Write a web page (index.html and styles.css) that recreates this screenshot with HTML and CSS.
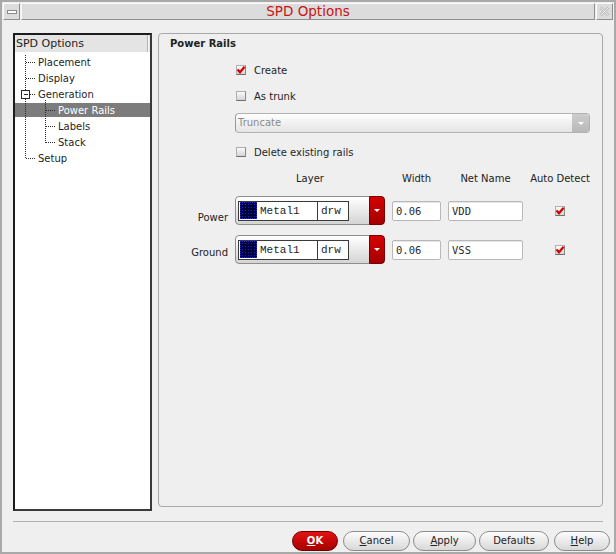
FILE: index.html
```html
<!DOCTYPE html>
<html>
<head>
<meta charset="utf-8">
<title>SPD Options</title>
<link rel="stylesheet" href="styles.css">
</head>
<body>
<div class="window">
  <div class="titlebar">
    <div class="tb-btn"><span class="tb-min-bar"></span></div>
    <div class="tb-title">SPD Options</div>
    <div class="tb-btn">
      <svg width="11" height="11" viewBox="0 0 11 11">
        <path d="M1.5 1.5 L9.5 9.5 M9.5 1.5 L1.5 9.5" stroke="#c2c2c2" stroke-width="3" fill="none"/>
        <path d="M1.5 1.5 L9.5 9.5 M9.5 1.5 L1.5 9.5" stroke="#ececec" stroke-width="1" fill="none"/>
      </svg>
    </div>
  </div>

  <div class="main">
    <div class="tree">
      <div class="tree-head"><span class="tree-head-text">SPD Options</span><span class="tree-handle"></span></div>
      <div class="tree-body">
        <div class="node l1">Placement</div>
        <div class="node l1">Display</div>
        <div class="node l1">Generation</div>
        <div class="node l2 selected">Power Rails</div>
        <div class="node l2">Labels</div>
        <div class="node l2">Stack</div>
        <div class="node l1">Setup</div>
        <svg class="tree-lines" width="60" height="112" viewBox="0 0 60 112" shape-rendering="crispEdges">
          <g stroke="#2a2a2a" stroke-width="1" stroke-dasharray="1 1" fill="none">
            <path d="M10.5 3 V107"/>
            <path d="M11 10.5 H21"/>
            <path d="M11 26.5 H21"/>
            <path d="M11 106.5 H21"/>
            <path d="M15 42.5 H21"/>
            <path d="M30.5 48 V91"/>
            <path d="M31 58.5 H41"/>
            <path d="M31 74.5 H41"/>
            <path d="M31 90.5 H41"/>
          </g>
          <rect x="6.5" y="38.5" width="8" height="8" fill="#fff" stroke="#2a2a2a"/>
          <path d="M8.5 42.5 H12.5" stroke="#2a2a2a"/>
        </svg>
      </div>
    </div>

    <div class="group">
      <div class="g-title">Power Rails</div>
      <div class="opts">
        <div class="chk-row r-create"><span class="chk"><svg width="10" height="10" viewBox="0 0 10 10"><path d="M1.5 4.5 L4 7.3 L8.6 1.8" stroke="#d40000" stroke-width="2.2" fill="none"/></svg></span>Create</div>
        <div class="chk-row r-trunk"><span class="chk"></span>As trunk</div>
        <div class="combo"><span class="combo-text">Truncate</span><span class="combo-arrow"><span class="tri"></span></span></div>
        <div class="chk-row r-delete"><span class="chk"></span>Delete existing rails</div>
      </div>

      <div class="rails">
        <div></div>
        <div class="hdr">Layer</div>
        <div class="hdr">Width</div>
        <div class="hdr">Net Name</div>
        <div class="hdr">Auto Detect</div>

        <div class="lbl lbl-p">Power</div>
        <div class="layer-combo">
          <div class="layer-box">
            <span class="swatch"></span>
            <span class="lname">Metal1</span>
            <span class="lpurp">drw</span>
          </div>
          <span class="lc-fill"></span>
          <span class="lc-btn"><span class="tri"></span></span>
        </div>
        <div class="cell"><div class="input">0.06</div></div>
        <div class="cell"><div class="input">VDD</div></div>
        <div class="cell center"><span class="chk"><svg width="10" height="10" viewBox="0 0 10 10"><path d="M1.5 4.5 L4 7.3 L8.6 1.8" stroke="#d40000" stroke-width="2.2" fill="none"/></svg></span></div>

        <div class="lbl lbl-g">Ground</div>
        <div class="layer-combo">
          <div class="layer-box">
            <span class="swatch"></span>
            <span class="lname">Metal1</span>
            <span class="lpurp">drw</span>
          </div>
          <span class="lc-fill"></span>
          <span class="lc-btn"><span class="tri"></span></span>
        </div>
        <div class="cell"><div class="input">0.06</div></div>
        <div class="cell"><div class="input">VSS</div></div>
        <div class="cell center"><span class="chk"><svg width="10" height="10" viewBox="0 0 10 10"><path d="M1.5 4.5 L4 7.3 L8.6 1.8" stroke="#d40000" stroke-width="2.2" fill="none"/></svg></span></div>
      </div>
    </div>
  </div>

  <div class="sep"></div>

  <div class="buttons">
    <div class="btn btn-ok"><u>O</u>K</div>
    <div class="btn btn-cancel"><u>C</u>ancel</div>
    <div class="btn btn-apply"><u>A</u>pply</div>
    <div class="btn btn-defaults">Defaults</div>
    <div class="btn btn-help"><u>H</u>elp</div>
  </div>
</div>
</body>
</html>
```

FILE: styles.css
```css
* { box-sizing: border-box; }
html, body { margin: 0; padding: 0; }
body {
  font-family: "DejaVu Sans", "Bitstream Vera Sans", sans-serif;
  font-size: 10px;
  color: #1e1e1e;
  background: #efefef;
}

.window {
  width: 616px;
  height: 554px;
  border: 2px solid #a9a9a9;
  padding: 1px;
  background: #efefef;
  display: flex;
  flex-direction: column;
}

/* title bar */
.titlebar { height: 17px; display: flex; }
.tb-btn {
  width: 17px;
  height: 17px;
  background: #dcdcdc;
  border: 1px solid;
  border-color: #fafafa #8e8e8e #8e8e8e #fafafa;
  display: flex;
  align-items: center;
  justify-content: center;
}
.tb-min-bar {
  width: 10px;
  height: 4px;
  background: #fdfdfd;
  border: 1px solid #8a8a8a;
}
.tb-title {
  flex: 1;
  margin: 0 1px;
  background: #dcdcdc;
  border: 1px solid;
  border-color: #fafafa #8e8e8e #8e8e8e #fafafa;
  color: #c81414;
  font-size: 13.5px;
  line-height: 15px;
  text-align: center;
}

/* main area */
.main {
  display: flex;
  align-items: flex-start;
  gap: 6px;
  padding: 13px 0 0 10px;
}

.tree {
  width: 139px;
  height: 478px;
  border: 2px solid #1c1c1c;
  border-right-color: #3a3a3a;
  border-bottom-color: #3a3a3a;
  background: #fff;
}
.tree-head {
  height: 17px;
  display: flex;
  align-items: stretch;
  background: #e4e4e4;
  font-size: 11px;
  line-height: 18px;
}
.tree-head-text { flex: 1; padding-left: 1px; }
.tree-handle {
  width: 2px;
  margin-right: 1px;
  border-left: 1px solid #b4b4b4;
  border-right: 1px solid #f8f8f8;
}
.tree-body {
  position: relative;
  padding-top: 2px;
}
.node {
  height: 16px;
  line-height: 18px;
  white-space: nowrap;
}
.node.l1 { padding-left: 23px; }
.node.l2 { padding-left: 43px; }
.node.selected {
  color: #fff;
  background: linear-gradient(transparent 1px, #7c7c7c 1px, #7c7c7c 15px, transparent 15px);
}
.tree-lines {
  position: absolute;
  left: 0;
  top: 0;
  pointer-events: none;
}

/* group box */
.group {
  width: 445px;
  height: 474px;
  border: 1px solid #a8a8a8;
  border-radius: 4px;
  padding-top: 4px;
}
.g-title {
  height: 12px;
  line-height: 12px;
  padding-left: 11px;
  font-weight: bold;
  color: #222;
}
.opts {
  margin-left: 76px;
  width: 355px;
  display: flex;
  flex-direction: column;
}
.chk-row {
  height: 16px;
  display: flex;
  align-items: center;
  gap: 8px;
  padding-left: 1px;
  white-space: nowrap;
}
.r-create { margin-top: 12px; }
.r-trunk { margin-top: 10px; }
.r-delete { margin-top: 11px; }

.chk {
  width: 10px;
  height: 10px;
  flex: none;
  display: inline-block;
  position: relative;
  background: linear-gradient(#fbfbfb, #d4d4d4);
  border: 1px solid #b0b0b0;
  border-bottom-color: #6e6e6e;
  border-right-color: #8a8a8a;
}
.chk svg {
  position: absolute;
  left: -1px;
  top: -1px;
}

.combo {
  margin-top: 9px;
  height: 20px;
  display: flex;
  border: 1px solid #b2b2b2;
  border-left-color: #9a9a9a;
  border-radius: 4px;
  background: linear-gradient(#fefefe, #e4e4e4);
  color: #8a8a8a;
}
.combo-text {
  flex: 1;
  padding-left: 2px;
  line-height: 18px;
}
.combo-arrow {
  width: 17px;
  background: linear-gradient(#cdcdcd, #b9b9b9);
  border-radius: 0 3px 3px 0;
  display: flex;
  align-items: center;
  justify-content: center;
}
.tri {
  width: 0;
  height: 0;
  border-left: 3px solid transparent;
  border-right: 3px solid transparent;
  border-top: 3px solid #fff;
}

/* rails table */
.rails {
  margin-top: 13px;
  display: grid;
  grid-template-columns: 69px 150px 49px 75px 60px;
  grid-template-rows: 13px 29px 29px;
  column-gap: 7px;
  row-gap: 10px;
}
.hdr {
  text-align: center;
  line-height: 12px;
  white-space: nowrap;
  color: #222;
}
.lbl {
  text-align: right;
  line-height: 12px;
  align-self: start;
  color: #222;
}
.lbl-p { margin-top: 16px; }
.lbl-g { margin-top: 12px; }

.layer-combo {
  height: 29px;
  display: flex;
  align-items: center;
  padding-left: 2px;
  border: 1px solid #8e8e8e;
  border-radius: 4px;
  background: linear-gradient(#ffffff, #d4d4d4);
}
.layer-box {
  width: 111px;
  height: 20px;
  display: flex;
  align-items: stretch;
  border: 1px solid #3a3a3a;
  background: #fff;
  font-family: "Liberation Mono", "Courier New", monospace;
  font-size: 11px;
  line-height: 18px;
  color: #1e1e1e;
}
.swatch {
  width: 17px;
  height: 17px;
  margin: 0 1px;
  align-self: center;
  border: 1px dotted #2424e0;
  background-color: #000038;
  background-image: radial-gradient(circle, #1a1ad8 0.6px, transparent 0.9px);
  background-size: 3px 3px;
  background-position: 0 0;
}
.lname {
  width: 60px;
  padding-left: 2px;
  border-right: 1px solid #3a3a3a;
}
.lpurp {
  flex: 1;
  padding-left: 3px;
}
.lc-fill { flex: 1; }
.lc-btn {
  width: 16px;
  height: 29px;
  margin: -1px -1px -1px 0;
  border: 1px solid #7a0000;
  border-radius: 0 4px 4px 0;
  background: linear-gradient(#d60000, #a40000);
  display: flex;
  align-items: center;
  justify-content: center;
}

.cell {
  display: flex;
  align-items: center;
}
.cell.center { justify-content: center; }
.input {
  width: 100%;
  height: 20px;
  border: 1px solid #b8b8b8;
  border-radius: 2px;
  background: #fff;
  box-shadow: inset 0 1px 0 #e6e6e6;
  padding-left: 3px;
  font-family: "DejaVu Sans Mono", monospace;
  font-size: 10.5px;
  line-height: 18px;
  color: #2a2a2a;
}

/* bottom */
.sep {
  height: 1px;
  margin: 10px 10px 0 10px;
  background: #b2b2b2;
}
.buttons {
  margin-top: 9px;
  display: flex;
  justify-content: flex-end;
  padding-right: 3px;
}
.btn {
  height: 20px;
  border: 1px solid #8c8c8c;
  border-radius: 10px;
  background: linear-gradient(#fdfdfd, #d8d8d8);
  text-align: center;
  line-height: 18px;
  color: #222;
  white-space: nowrap;
}
.btn-ok {
  width: 46px;
  border-color: #700000;
  background: linear-gradient(#e41212, #a60000);
  color: #fff;
  font-weight: bold;
}
.btn-cancel { width: 67px; margin-left: 5px; }
.btn-apply { width: 63px; margin-left: 3px; }
.btn-defaults { width: 70px; margin-left: 3px; }
.btn-help { width: 56px; margin-left: 5px; }
```
